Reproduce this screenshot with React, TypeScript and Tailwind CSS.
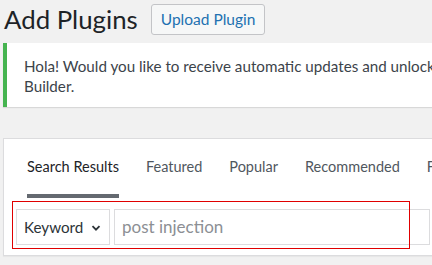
import React from "react";

export default function App() {
  return (
    <div
      className="w-[432px] h-[265px] overflow-hidden bg-[#f1f1f1] text-[#3c434a]"
      style={{ fontFamily: 'Lato, "Noto Sans", sans-serif' }}
    >
      <div className="flex items-center pl-[4px] pt-[4px] h-[31px] box-content">
        <h1 className="text-[25.8px] leading-none text-[#1d2327] font-normal">Add Plugins</h1>
        <button className="ml-[13px] h-[31px] px-[9px] border border-[#c3c4c7] bg-[#f6f7f7] rounded-[3px] text-[#2271b1] text-[15.5px] leading-none">
          Upload Plugin
        </button>
      </div>
      <div className="mt-[8px] ml-[3px] w-[600px] h-[64px] bg-white border-l-[4px] border-[#46b450] shadow-[0_1px_1px_rgba(0,0,0,0.1)] pl-[17px] pt-[13px]">
        <p className="text-[15.2px] leading-[20px] text-[#3c434a] whitespace-nowrap">
          Hola! Would you like to receive automatic updates and unlock premium support? Please
        </p>
        <p className="text-[15.2px] leading-[20px] text-[#3c434a]">Builder.</p>
      </div>
      <div className="mt-[31px] ml-[3px] w-[600px] h-[118px] bg-white border border-[#dcdcde] shadow-[0_1px_1px_rgba(0,0,0,0.04)]">
        <div className="flex pl-[23px] pt-[18px] gap-[27px] text-[14.5px] text-[#50575e] whitespace-nowrap">
          <div className="flex flex-col">
            <span className="leading-[20px] text-[#1d2327]">Search Results</span>
            <div className="mt-[17px] h-[4px] bg-[#646970]" />
          </div>
          <span className="leading-[20px]">Featured</span>
          <span className="leading-[20px]">Popular</span>
          <span className="leading-[20px]">Recommended</span>
          <span className="leading-[20px]">Favorites</span>
        </div>
        <div className="relative mt-[11px] ml-[12px] flex items-center h-[36px]">
          <div className="flex items-center h-[36px] w-[94px] border border-[#dcdcde] pl-[7px] pr-[8px] justify-between text-[15.2px] text-[#2c3338]">
            <span>Keyword</span>
            <svg width="10" height="10" viewBox="0 0 10 10" className="mt-[1px]">
              <path d="M1.5 3.2 L5 6.7 L8.5 3.2" stroke="#2c3338" strokeWidth="1.8" fill="none" />
            </svg>
          </div>
          <div className="ml-[4px] flex items-center h-[36px] w-[316px] border border-[#dcdcde] pl-[7px] text-[17px] text-[#8c8f94]">
            post injection
          </div>
          <div className="absolute left-[-4px] top-[-8px] w-[398px] h-[48px] border-[1.5px] border-[#e00000] pointer-events-none" />
        </div>
      </div>
    </div>
  );
}
